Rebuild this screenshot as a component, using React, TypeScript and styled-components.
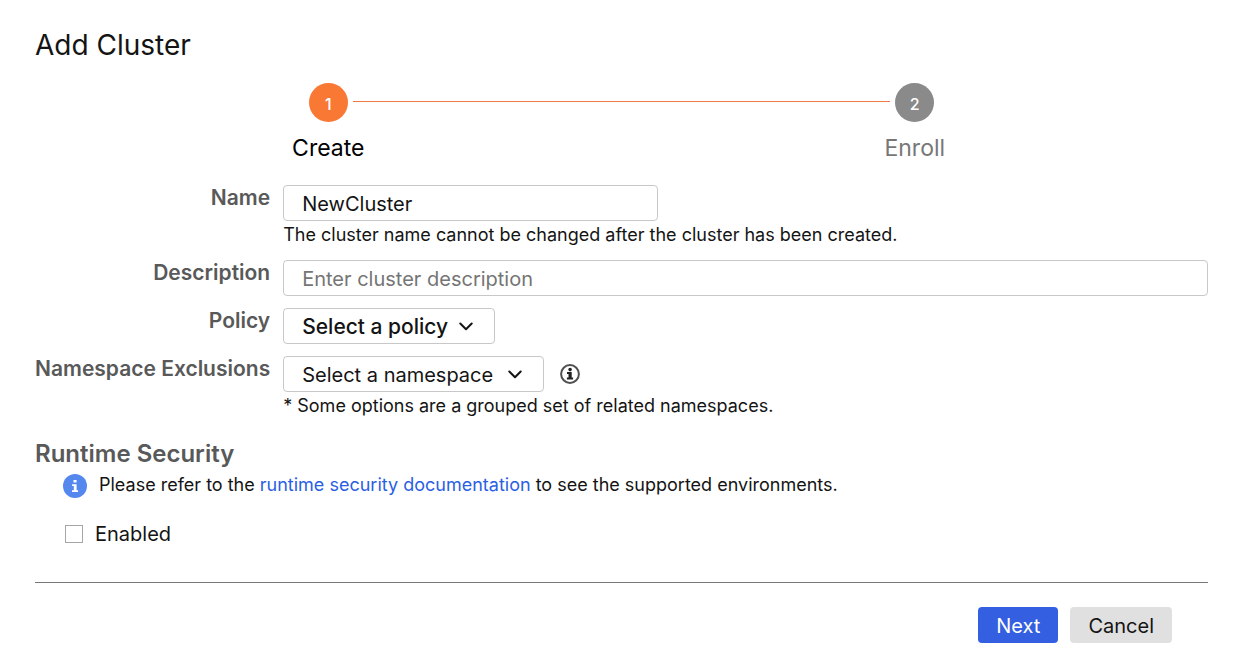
import React from "react";
import styled, { createGlobalStyle } from "styled-components";

const GlobalStyle = createGlobalStyle`
  *, *::before, *::after { box-sizing: border-box; }
  body {
    margin: 0;
    background: #fff;
    color: #141414;
    font-family: Inter, "Liberation Sans", sans-serif;
    font-size: 20px;
    line-height: 26px;
  }
  input, select, button { font: inherit; color: inherit; }
`;

const Page = styled.main`
  padding: 26px 33px 24px 35px;
`;

const Title = styled.h1`
  margin: 0 0 19px;
  font-size: 28px;
  line-height: 38px;
  font-weight: 400;
`;

const Steps = styled.ol`
  display: grid;
  grid-template-columns: 1fr 1fr;
  margin: 0 0 20px;
  padding: 0;
  list-style: none;
`;

const Step = styled.li<{ $active?: boolean }>`
  display: flex;
  flex-direction: column;
  align-items: center;
  gap: 10px;
  font-size: 23px;
  line-height: 33px;
  color: ${(p) => (p.$active ? "#000" : "#777")};
`;

const StepTrack = styled.div`
  display: grid;
  grid-template-columns: 1fr auto 1fr;
  gap: 5px;
  width: 100%;
`;

const StepCircle = styled.span<{ $active?: boolean }>`
  grid-column: 2;
  display: flex;
  align-items: center;
  justify-content: center;
  width: 39px;
  height: 39px;
  padding-top: 3px;
  border-radius: 50%;
  background: ${(p) => (p.$active ? "#f97834" : "#8a8a8a")};
  color: #fff;
  font-size: 16px;
  font-weight: 500;
`;

const StepLine = styled.span`
  height: 1px;
  margin-top: 18px;
  background: #f07a45;
`;

const Form = styled.form`
  margin: 0;
`;

const Fields = styled.div`
  display: grid;
  grid-template-columns: max-content 1fr;
  column-gap: 13px;
  row-gap: 12px;
`;

const FieldLabel = styled.label`
  text-align: right;
  font-size: 21px;
  font-weight: 600;
  color: #595959;
`;

const Field = styled.div`
  display: flex;
  flex-direction: column;
  align-items: flex-start;
`;

const TextInput = styled.input<{ $short?: boolean }>`
  width: ${(p) => (p.$short ? "375px" : "100%")};
  max-width: 100%;
  height: 36px;
  padding: 1px 18px 0;
  border: 1px solid #c8c8c8;
  border-radius: 4px;
  background: #fff;
  &::placeholder { color: #757575; opacity: 1; }
`;

const Hint = styled.p`
  margin: 0;
  font-size: 18px;
  line-height: 27px;
`;

const SelectRow = styled.div`
  display: flex;
  align-items: center;
  gap: 16px;
`;

const SelectBox = styled.span`
  display: inline-grid;
  align-items: center;
  & > * { grid-area: 1 / 1; }
  & > svg {
    justify-self: end;
    margin-right: 22px;
    pointer-events: none;
  }
`;

const Select = styled.select<{ $strong?: boolean }>`
  appearance: none;
  height: 36px;
  padding: 2px ${(p) => (p.$strong ? 46 : 50)}px 0 18px;
  border: 1px solid #c8c8c8;
  border-radius: 4px;
  background: #fff;
  font-size: ${(p) => (p.$strong ? 21 : 20)}px;
  font-weight: ${(p) => (p.$strong ? 500 : 400)};
`;

const InfoButton = styled.button`
  display: flex;
  padding: 0;
  border: 0;
  background: none;
`;

const SectionTitle = styled.h2`
  margin: 19px 0 0;
  font-size: 24px;
  line-height: 32px;
  font-weight: 600;
  color: #595959;
`;

const Notice = styled.p`
  display: flex;
  align-items: flex-start;
  gap: 12px;
  margin: 0 0 0 28px;
  padding: 1px 0;
  font-size: 18px;
  line-height: 27px;
  & > svg { flex: none; margin-top: 3px; }
`;

const DocLink = styled.a`
  color: #2b5fe3;
  text-decoration: none;
`;

const CheckLabel = styled.label`
  display: flex;
  width: fit-content;
  align-items: center;
  gap: 12px;
  margin: 22px 0 0 30px;
`;

const CheckBox = styled.input`
  appearance: none;
  width: 18px;
  height: 18px;
  margin: 0;
  border: 1px solid #a6a6a6;
  background: #fff;
  &:checked { background: #335fe0; }
`;

const Footer = styled.footer`
  display: flex;
  justify-content: flex-end;
  gap: 12px;
  margin-top: 35px;
  padding: 24px 36px 0 0;
  border-top: 1px solid #777;
`;

const Button = styled.button<{ $primary?: boolean }>`
  height: 36px;
  padding: 1px 18px 0;
  border: 0;
  border-radius: 4px;
  background: ${(p) => (p.$primary ? "#335fe0" : "#e0e0e0")};
  color: ${(p) => (p.$primary ? "#fff" : "#141414")};
`;

const Chevron = () => (
  <svg width="14" height="9" viewBox="0 0 14 9" fill="none" stroke="#141414" strokeWidth="2" strokeLinecap="round" strokeLinejoin="round" aria-hidden="true">
    <path d="M1.3 1.5 7 7.2 12.7 1.5" />
  </svg>
);

const InfoOutline = () => (
  <svg width="20" height="20" viewBox="0 0 20 20" aria-hidden="true">
    <circle cx="10" cy="10" r="8.9" fill="none" stroke="#505050" strokeWidth="2" />
    <circle cx="10.1" cy="5.6" r="1.8" fill="#222" />
    <path d="M7 8h4.7v5.5h1.4v2H6.9v-2h1.6V10H7z" fill="#222" />
  </svg>
);

const InfoFilled = () => (
  <svg width="24" height="24" viewBox="0 0 24 24" aria-hidden="true">
    <circle cx="12" cy="12" r="12" fill="#5588ee" />
    <path d="M10.5 6h3.1v2.6h-3.1zM9.1 10.3h4.5v6h1.5V18H9v-1.7h1.8V12H9.1z" fill="#fff" />
  </svg>
);

export default function App() {
  return (
    <Page>
      <GlobalStyle />
      <Title>Add Cluster</Title>
      <Steps>
        <Step $active aria-current="step">
          <StepTrack>
            <StepCircle $active>1</StepCircle>
            <StepLine />
          </StepTrack>
          Create
        </Step>
        <Step>
          <StepTrack>
            <StepLine />
            <StepCircle>2</StepCircle>
          </StepTrack>
          Enroll
        </Step>
      </Steps>
      <Form onSubmit={(e) => e.preventDefault()}>
        <Fields>
          <FieldLabel htmlFor="name">Name</FieldLabel>
          <Field>
            <TextInput id="name" type="text" $short defaultValue="NewCluster" />
            <Hint>The cluster name cannot be changed after the cluster has been created.</Hint>
          </Field>
          <FieldLabel htmlFor="description">Description</FieldLabel>
          <Field>
            <TextInput id="description" type="text" placeholder="Enter cluster description" />
          </Field>
          <FieldLabel htmlFor="policy">Policy</FieldLabel>
          <Field>
            <SelectBox>
              <Select id="policy" $strong>
                <option>Select a policy</option>
              </Select>
              <Chevron />
            </SelectBox>
          </Field>
          <FieldLabel htmlFor="namespace">Namespace Exclusions</FieldLabel>
          <Field>
            <SelectRow>
              <SelectBox>
                <Select id="namespace">
                  <option>Select a namespace</option>
                </Select>
                <Chevron />
              </SelectBox>
              <InfoButton type="button" aria-label="About namespace exclusions">
                <InfoOutline />
              </InfoButton>
            </SelectRow>
            <Hint>* Some options are a grouped set of related namespaces.</Hint>
          </Field>
        </Fields>
        <SectionTitle>Runtime Security</SectionTitle>
        <Notice>
          <InfoFilled />
          <span>
            Please refer to the <DocLink href="#runtime-security">runtime security documentation</DocLink> to see the
            supported environments.
          </span>
        </Notice>
        <CheckLabel>
          <CheckBox type="checkbox" />
          Enabled
        </CheckLabel>
        <Footer>
          <Button type="submit" $primary>Next</Button>
          <Button type="button">Cancel</Button>
        </Footer>
      </Form>
    </Page>
  );
}
